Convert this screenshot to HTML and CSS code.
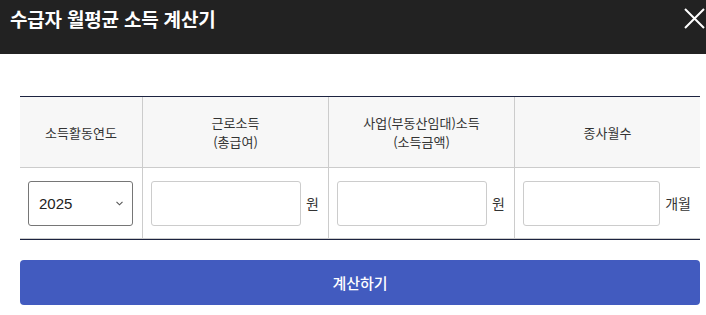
FILE: index.html
```html
<!DOCTYPE html>
<html lang="ko">
<head>
    <meta charset="UTF-8">
    <meta name="viewport" content="width=device-width, initial-scale=1.0">
    <title>수급자 월평균 소득 계산기</title>
    <link rel="stylesheet" href="styles.css">
</head>
<body>

    <div class="modal">
        <div class="modal-header">
            <h1>수급자 월평균 소득 계산기</h1>
            <button class="close-btn" aria-label="닫기">
                <svg width="21" height="21" viewBox="0 0 21 21">
                    <path d="M1 1 L20 20 M20 1 L1 20" stroke="#fff" stroke-width="2" fill="none"/>
                </svg>
            </button>
        </div>

        <div class="modal-body">
            <table class="calc-table">
                <thead>
                    <tr>
                        <th class="col-year">소득활동연도</th>
                        <th class="col-money">근로소득<br>(총급여)</th>
                        <th class="col-money">사업(부동산임대)소득<br>(소득금액)</th>
                        <th class="col-month">종사월수</th>
                    </tr>
                </thead>
                <tbody>
                    <tr>
                        <td>
                            <div class="select-wrap">
                                <select id="year">
                                    <option>2025</option>
                                    <option>2024</option>
                                    <option>2023</option>
                                </select>
                                <svg class="chevron" width="7" height="5" viewBox="0 0 7 5">
                                    <path d="M0.5 0.8 L3.5 3.8 L6.5 0.8" stroke="#555" stroke-width="1.1" fill="none"/>
                                </svg>
                            </div>
                        </td>
                        <td>
                            <div class="field">
                                <input type="text" id="earned">
                                <span class="unit">원</span>
                            </div>
                        </td>
                        <td>
                            <div class="field">
                                <input type="text" id="business">
                                <span class="unit">원</span>
                            </div>
                        </td>
                        <td>
                            <div class="field">
                                <input type="text" id="months">
                                <span class="unit">개월</span>
                            </div>
                        </td>
                    </tr>
                </tbody>
            </table>

            <button class="calc-btn" id="calcButton">계산하기</button>
        </div>
    </div>

</body>
</html>
```

FILE: styles.css
```css
body {
    font-family: "Noto Sans CJK KR", "Noto Sans", sans-serif;
    margin: 0;
    background: #fff;
    color: #333;
}
.modal {
    width: 706px;
}
/* Header bar */
.modal-header {
    height: 54px;
    box-sizing: border-box;
    background: #222;
    padding: 6px 1px 0 10px;
    display: flex;
    justify-content: space-between;
    align-items: flex-start;
}
.modal-header h1 {
    margin: 0;
    font-size: 19px;
    line-height: 26px;
    font-weight: 700;
    color: #fff;
    letter-spacing: -0.2px;
}
.close-btn {
    background: none;
    border: none;
    padding: 0;
    margin-top: 2px;
    cursor: pointer;
    display: block;
}
.close-btn svg {
    display: block;
}
/* Body */
.modal-body {
    width: 680px;
    padding: 42px 0 0 20px;
}
.calc-table {
    width: 680px;
    border-collapse: separate;
    border-spacing: 0;
    table-layout: fixed;
    border-top: 1px solid #1c2340;
    border-bottom: 1px solid #1c2340;
}
.col-year {
    width: 122px;
}
.col-money {
    width: 185px;
}
.calc-table th {
    background: #f7f7f7;
    height: 70px;
    padding: 0;
    font-size: 13px;
    line-height: 19px;
    font-weight: 400;
    color: #333;
    text-align: center;
    border-bottom: 1px solid #ccc;
    border-right: 1px solid #ccc;
}
.calc-table td {
    height: 70px;
    padding: 0 9px 0 8px;
    border-bottom: 1px solid #ccc;
    border-right: 1px solid #ccc;
}
.calc-table th:last-child,
.calc-table td:last-child {
    border-right: none;
}
.select-wrap {
    position: relative;
}
.select-wrap select {
    appearance: none;
    -webkit-appearance: none;
    width: 105px;
    height: 45px;
    box-sizing: border-box;
    border: 1px solid #767676;
    border-radius: 3px;
    background: #fff;
    padding: 0 0 0 10px;
    font-family: "Liberation Sans", Arial, sans-serif;
    font-size: 15px;
    color: #222;
}
.chevron {
    position: absolute;
    left: 88px;
    top: 20px;
}
.field {
    display: flex;
    align-items: center;
    gap: 5px;
}
.field input {
    flex: 1;
    min-width: 0;
    height: 45px;
    box-sizing: border-box;
    border: 1px solid #ccc;
    border-radius: 3px;
    padding: 0 8px;
    font-size: 14px;
}
.unit {
    font-size: 14px;
    color: #333;
    white-space: nowrap;
}
/* Calculate button */
.calc-btn {
    display: block;
    width: 680px;
    height: 45px;
    margin-top: 20px;
    background: #425bbf;
    color: #fff;
    border: none;
    border-radius: 4px;
    font-family: "Noto Sans CJK KR", "Noto Sans", sans-serif;
    font-size: 15px;
    font-weight: 500;
    cursor: pointer;
}
.calc-btn:hover {
    background: #384fae;
}
```
